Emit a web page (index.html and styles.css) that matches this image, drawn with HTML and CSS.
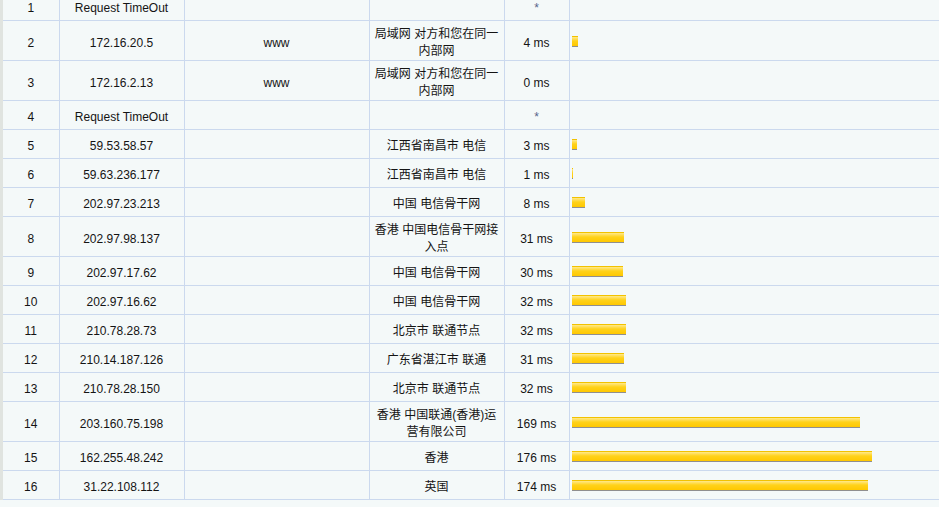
FILE: index.html
```html
<!DOCTYPE html>
<html lang="zh-CN">
<head>
    <meta charset="UTF-8">
    <title>Traceroute</title>
    <link rel="stylesheet" href="styles.css">
</head>
<body>
    <div class="page">
        <table class="trace">
            <colgroup>
                <col class="c-hop">
                <col class="c-ip">
                <col class="c-host">
                <col class="c-loc">
                <col class="c-time">
                <col>
            </colgroup>
            <tbody>
                <tr><td>1</td><td>Request TimeOut</td><td></td><td></td><td class="star">*</td><td></td></tr>
                <tr><td>2</td><td>172.16.20.5</td><td>www</td><td>局域网 对方和您在同一内部网</td><td>4 ms</td><td class="bar-cell"><span class="bar" style="width:6px"></span></td></tr>
                <tr><td>3</td><td>172.16.2.13</td><td>www</td><td>局域网 对方和您在同一内部网</td><td>0 ms</td><td class="bar-cell"></td></tr>
                <tr><td>4</td><td>Request TimeOut</td><td></td><td></td><td class="star">*</td><td></td></tr>
                <tr><td>5</td><td>59.53.58.57</td><td></td><td>江西省南昌市 电信</td><td>3 ms</td><td class="bar-cell"><span class="bar" style="width:5px"></span></td></tr>
                <tr><td>6</td><td>59.63.236.177</td><td></td><td>江西省南昌市 电信</td><td>1 ms</td><td class="bar-cell"><span class="bar" style="width:1px"></span></td></tr>
                <tr><td>7</td><td>202.97.23.213</td><td></td><td>中国 电信骨干网</td><td>8 ms</td><td class="bar-cell"><span class="bar" style="width:13px"></span></td></tr>
                <tr><td>8</td><td>202.97.98.137</td><td></td><td>香港 中国电信骨干网接入点</td><td>31 ms</td><td class="bar-cell"><span class="bar" style="width:52px"></span></td></tr>
                <tr><td>9</td><td>202.97.17.62</td><td></td><td>中国 电信骨干网</td><td>30 ms</td><td class="bar-cell"><span class="bar" style="width:51px"></span></td></tr>
                <tr><td>10</td><td>202.97.16.62</td><td></td><td>中国 电信骨干网</td><td>32 ms</td><td class="bar-cell"><span class="bar" style="width:54px"></span></td></tr>
                <tr><td>11</td><td>210.78.28.73</td><td></td><td>北京市 联通节点</td><td>32 ms</td><td class="bar-cell"><span class="bar" style="width:54px"></span></td></tr>
                <tr><td>12</td><td>210.14.187.126</td><td></td><td>广东省湛江市 联通</td><td>31 ms</td><td class="bar-cell"><span class="bar" style="width:52px"></span></td></tr>
                <tr><td>13</td><td>210.78.28.150</td><td></td><td>北京市 联通节点</td><td>32 ms</td><td class="bar-cell"><span class="bar" style="width:54px"></span></td></tr>
                <tr><td>14</td><td>203.160.75.198</td><td></td><td>香港 中国联通(香港)运营有限公司</td><td>169 ms</td><td class="bar-cell"><span class="bar" style="width:288px"></span></td></tr>
                <tr><td>15</td><td>162.255.48.242</td><td></td><td>香港</td><td>176 ms</td><td class="bar-cell"><span class="bar" style="width:300px"></span></td></tr>
                <tr><td>16</td><td>31.22.108.112</td><td></td><td>英国</td><td>174 ms</td><td class="bar-cell"><span class="bar" style="width:296px"></span></td></tr>
            </tbody>
        </table>
    </div>
</body>
</html>
```

FILE: styles.css
```css
:root {
    --bg-color: #f4f9f9;
    --line-color: #cbd9ee;
    --text-color: #141414;
}

html, body {
    margin: 0;
    padding: 0;
    overflow: hidden;
}

body {
    background-color: var(--bg-color);
    color: var(--text-color);
    font-family: "Liberation Sans", "Noto Sans CJK SC", sans-serif;
    font-size: 12px;
}

.page {
    border-left: 3px solid #e0e4e0;
    min-height: 100vh;
}

.trace {
    width: 100%;
    margin-top: -9px;
    border-collapse: collapse;
    table-layout: fixed;
}

.c-hop { width: 56px; }
.c-ip { width: 125px; }
.c-host { width: 185px; }
.c-loc { width: 135px; }
.c-time { width: 65px; }

.trace td {
    box-sizing: border-box;
    height: 29px;
    padding: 5px 4px 0;
    line-height: 17px;
    text-align: center;
    vertical-align: middle;
    border: 1px solid var(--line-color);
}

.trace td:first-child {
    border-left: 0;
}

.trace td:last-child {
    border-right: 0;
}

.trace td.star {
    color: #55658a;
}

.trace td.bar-cell {
    text-align: left;
    padding: 3px 2px 2px;
}

.bar {
    display: block;
    height: 9px;
    border-top: 1px solid #f2c200;
    border-bottom: 1px solid #8f8f8f;
    background: linear-gradient(to bottom, #ffe98a 0%, #ffd21a 45%, #ffc800 100%);
}
```
